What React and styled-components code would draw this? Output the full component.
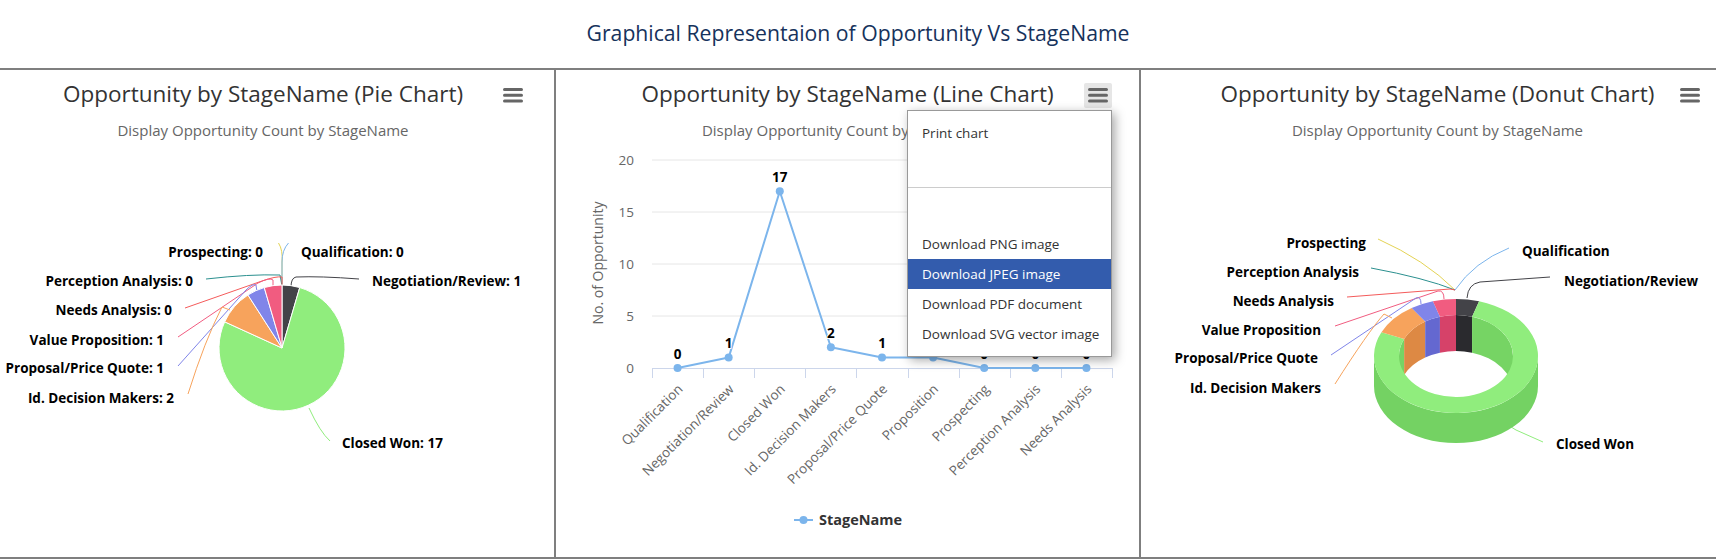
import React from "react"
import styled, { createGlobalStyle } from "styled-components"

const LINE = "#7f7f7f"
const FONT = `"Open Sans", "Noto Sans", "DejaVu Sans", sans-serif`

const GlobalStyle = createGlobalStyle`
  * {
    box-sizing: border-box;
  }
  body {
    margin: 0;
    background: #fff;
    font-family: ${FONT};
  }
`

const Page = styled.div`
  width: 1716px;
  height: 559px;
  overflow: hidden;
  background: #fff;
`

const Header = styled.header`
  height: 70px;
  border-bottom: 2px solid ${LINE};
  display: flex;
  align-items: center;
  justify-content: center;
  padding-bottom: 4px;
`

const PageTitle = styled.h1`
  margin: 0;
  font-size: 21.2px;
  font-weight: 400;
  color: #16325c;
`

const PanelRow = styled.div`
  display: grid;
  grid-template-columns: 554px 585px 1fr;
  height: 489px;
  border-bottom: 2px solid ${LINE};
`

const Panel = styled.section`
  position: relative;
  min-width: 0;
  border-left: ${(p) => (p.$divided ? `2px solid ${LINE}` : "none")};
`

const ChartHead = styled.div`
  height: 71px;
  padding: 9px ${(p) => p.$padRight || 0}px 0 ${(p) => p.$padLeft || 0}px;
  text-align: center;
  white-space: nowrap;
`

const ChartTitle = styled.h2`
  margin: 0;
  font-size: 22.5px;
  line-height: 30px;
  font-weight: 400;
  color: #333;
`

const ChartSubtitle = styled.p`
  margin: 11px 0 0;
  font-size: 15px;
  line-height: 21px;
  color: #666;
`

const MenuButton = styled.button`
  position: absolute;
  top: 13px;
  right: ${(p) => p.$right}px;
  width: 28px;
  height: 25px;
  padding: 0;
  border: none;
  border-radius: 2px;
  background: ${(p) => (p.$open ? "#e6e6e6" : "transparent")};
  display: flex;
  align-items: center;
  justify-content: center;
  cursor: pointer;
`

const ExportMenu = styled.ul`
  position: absolute;
  left: 351px;
  top: 40px;
  width: 205px;
  margin: 0;
  padding: 7px 0;
  list-style: none;
  background: #fff;
  border: 1px solid #999;
  box-shadow: 3px 3px 10px rgba(0, 0, 0, 0.35);
  z-index: 2;
`

const MenuItem = styled.li`
  height: 30px;
  padding: 0 14px;
  font-size: 13.5px;
  line-height: 30px;
  white-space: nowrap;
  color: ${(p) => (p.$active ? "#fff" : "#333")};
  background: ${(p) => (p.$active ? "#335cad" : "transparent")};
`

const MenuGap = styled.li`
  height: ${(p) => p.$h}px;
`

const MenuDivider = styled.li`
  height: 1px;
  background: #ccc;
`

const ChartCanvas = styled.svg`
  display: block;
  overflow: visible;
  font-family: ${FONT};
`

const DataLabel = styled.text`
  font-size: 13.5px;
  font-weight: 700;
  fill: #000;
  stroke: #fff;
  stroke-width: 2px;
  stroke-linejoin: round;
  paint-order: stroke;
`

const AxisLabel = styled.text`
  font-size: 13.5px;
  fill: #666;
`

const AxisTitle = styled.text`
  font-size: 14px;
  fill: #666;
`

const LegendText = styled.text`
  font-size: 14.5px;
  font-weight: 700;
  fill: #333;
`

const Burger = () => (
  <svg width="20" height="15" viewBox="0 0 20 15">
    <path
      d="M1.5 1.5H18.5M1.5 7.2H18.5M1.5 12.9H18.5"
      stroke="#666"
      strokeWidth="3"
      strokeLinecap="round"
    />
  </svg>
)

const STAGES = [
  { name: "Qualification", value: 0, color: "#7cb5ec", inner: "#5f97cf" },
  { name: "Negotiation/Review", value: 1, color: "#434348", inner: "#2a2a2e" },
  { name: "Closed Won", value: 17, color: "#90ed7d", inner: "#76d464" },
  { name: "Id. Decision Makers", value: 2, color: "#f7a35c", inner: "#dd8944" },
  { name: "Proposal/Price Quote", value: 1, color: "#8085e9", inner: "#6468d0" },
  { name: "Value Proposition", value: 1, color: "#f15c80", inner: "#d64269" },
  { name: "Prospecting", value: 0, color: "#e4d354", inner: "#c9b83c" },
  { name: "Perception Analysis", value: 0, color: "#2b908f", inner: "#1c7675" },
  { name: "Needs Analysis", value: 0, color: "#f45b5b", inner: "#d94444" },
]

const polar = (cx, cy, rx, ry, deg) => {
  const a = (deg * Math.PI) / 180
  return [cx + rx * Math.sin(a), cy - ry * Math.cos(a)]
}

const withAngles = (data) => {
  const total = data.reduce((s, d) => s + d.value, 0)
  let start = 0
  return data
    .map((d) => {
      const sweep = (d.value / total) * 360
      const s = { ...d, a1: start, a2: start + sweep }
      start += sweep
      return s
    })
    .filter((s) => s.value > 0)
}

const pieSlice = (cx, cy, r, a1, a2) => {
  const [x1, y1] = polar(cx, cy, r, r, a1)
  const [x2, y2] = polar(cx, cy, r, r, a2)
  const large = a2 - a1 > 180 ? 1 : 0
  return `M${cx},${cy} L${x1},${y1} A${r},${r} 0 ${large} 1 ${x2},${y2} Z`
}

// pie -----------------------------------------------------------------

const PIE = { cx: 282, cy: 348, r: 63 }

const PIE_LABELS = [
  { text: "Prospecting: 0", x: 263, y: 252, anchor: "end", color: "#e4d354", d: "M278.5,243 Q283,250 282,262 L282,286" },
  { text: "Qualification: 0", x: 301, y: 252, anchor: "start", color: "#7cb5ec", d: "M288.5,243 Q282,250 282,262 L282,286" },
  { text: "Perception Analysis: 0", x: 193, y: 281, anchor: "end", color: "#2b908f", d: "M206,279 Q250,274 280,275 L282,286" },
  { text: "Negotiation/Review: 1", x: 372, y: 281, anchor: "start", color: "#434348", d: "M359,279 Q320,276 296,277 Q291,278 291,287" },
  { text: "Needs Analysis: 0", x: 172, y: 310, anchor: "end", color: "#f45b5b", d: "M185,308 L262,281 Q276,276 282,277 L282,286" },
  { text: "Value Proposition: 1", x: 164, y: 340, anchor: "end", color: "#f15c80", d: "M178,337 L258,283 Q270,277 273,280 L273,287" },
  { text: "Proposal/Price Quote: 1", x: 164, y: 368, anchor: "end", color: "#8085e9", d: "M178,366 L246,290 Q253,283 256,285 L257,292" },
  { text: "Id. Decision Makers: 2", x: 174, y: 398, anchor: "end", color: "#f7a35c", d: "M188,394 Q205,340 222,307 L230,310" },
  { text: "Closed Won: 17", x: 342, y: 443, anchor: "start", color: "#90ed7d", d: "M330,441 Q320,432 309,408" },
]

const PieChart = () => (
  <ChartCanvas width="554" height="416">
    <g transform="translate(0,-141)">
      {PIE_LABELS.map((l) => (
        <path key={l.text} d={l.d} fill="none" stroke={l.color} strokeWidth="1" />
      ))}
      {withAngles(STAGES).map((s) => (
        <path
          key={s.name}
          d={pieSlice(PIE.cx, PIE.cy, PIE.r, s.a1, s.a2)}
          fill={s.color}
          stroke="#fff"
          strokeWidth="1"
          strokeLinejoin="round"
        />
      ))}
      {PIE_LABELS.map((l) => (
        <DataLabel key={l.text} x={l.x} y={l.y + 4.5} textAnchor={l.anchor}>
          {l.text}
        </DataLabel>
      ))}
    </g>
  </ChartCanvas>
)

// line ----------------------------------------------------------------

const CATEGORIES = [
  "Qualification",
  "Negotiation/Review",
  "Closed Won",
  "Id. Decision Makers",
  "Proposal/Price Quote",
  "Proposition",
  "Prospecting",
  "Perception Analysis",
  "Needs Analysis",
]
const COUNTS = [0, 1, 17, 2, 1, 1, 0, 0, 0]
const PLOT = { left: 652, right: 1112, top: 160, bottom: 368 }
const STEP = (PLOT.right - PLOT.left) / CATEGORIES.length
const xOf = (i) => PLOT.left + STEP * (i + 0.5)
const yOf = (v) => PLOT.bottom - (v * (PLOT.bottom - PLOT.top)) / 20

const LineChart = () => {
  const points = COUNTS.map((v, i) => [xOf(i), yOf(v)])
  return (
    <ChartCanvas width="583" height="416">
      <g transform="translate(-556,-141)">
        {[20, 15, 10, 5].map((v) => (
          <line key={v} x1={PLOT.left} x2={PLOT.right} y1={yOf(v)} y2={yOf(v)} stroke="#e6e6e6" />
        ))}
        {[20, 15, 10, 5, 0].map((v) => (
          <AxisLabel key={v} x="634" y={yOf(v) + 4.5} textAnchor="end">
            {v}
          </AxisLabel>
        ))}
        <AxisTitle transform="translate(603,263) rotate(-90)" textAnchor="middle">
          No. of Opportunity
        </AxisTitle>
        <line x1={PLOT.left} x2={PLOT.right} y1="368.5" y2="368.5" stroke="#ccd6eb" />
        {Array.from({ length: CATEGORIES.length + 1 }, (_, i) => {
          const x = Math.round(PLOT.left + STEP * i) + 0.5
          return <line key={i} x1={x} x2={x} y1="368" y2="378" stroke="#ccd6eb" />
        })}
        {CATEGORIES.map((c, i) => (
          <AxisLabel
            key={c}
            transform={`translate(${xOf(i) + 6},390) rotate(-45)`}
            textAnchor="end"
          >
            {c}
          </AxisLabel>
        ))}
        <polyline
          points={points.map((p) => p.join(",")).join(" ")}
          fill="none"
          stroke="#7cb5ec"
          strokeWidth="2"
          strokeLinejoin="round"
        />
        {points.map(([x, y], i) => (
          <circle key={i} cx={x} cy={y} r="4" fill="#7cb5ec" />
        ))}
        {points.map(([x, y], i) => (
          <DataLabel key={i} x={x} y={y - 9.5} textAnchor="middle">
            {COUNTS[i]}
          </DataLabel>
        ))}
        <line x1="794" x2="813" y1="520" y2="520" stroke="#7cb5ec" strokeWidth="2" />
        <circle cx="803.5" cy="520" r="4" fill="#7cb5ec" />
        <LegendText x="819" y="525">
          StageName
        </LegendText>
      </g>
    </ChartCanvas>
  )
}

// donut ---------------------------------------------------------------

const DONUT = { cx: 1456, cy: 356, rx: 82, ry: 57, irx: 57, iry: 41, depth: 30, innerDepth: 36 }

const ringSegment = ({ cx, cy, rx, ry, irx, iry }, a1, a2) => {
  const [ox1, oy1] = polar(cx, cy, rx, ry, a1)
  const [ox2, oy2] = polar(cx, cy, rx, ry, a2)
  const [ix1, iy1] = polar(cx, cy, irx, iry, a1)
  const [ix2, iy2] = polar(cx, cy, irx, iry, a2)
  const large = a2 - a1 > 180 ? 1 : 0
  return `M${ox1},${oy1} A${rx},${ry} 0 ${large} 1 ${ox2},${oy2} L${ix2},${iy2} A${irx},${iry} 0 ${large} 0 ${ix1},${iy1} Z`
}

const wallBand = (cx, cy, rx, ry, depth, a1, a2) => {
  const [x1, y1] = polar(cx, cy, rx, ry, a1)
  const [x2, y2] = polar(cx, cy, rx, ry, a2)
  const large = a2 - a1 > 180 ? 1 : 0
  return `M${x1},${y1} A${rx},${ry} 0 ${large} 1 ${x2},${y2} L${x2},${y2 + depth} A${rx},${ry} 0 ${large} 0 ${x1},${y1 + depth} Z`
}

// back half of the hole: 270..360 and 0..90
const backRanges = (a1, a2) =>
  [
    [0, 90],
    [270, 360],
  ]
    .map(([lo, hi]) => [Math.max(a1, lo), Math.min(a2, hi)])
    .filter(([lo, hi]) => hi > lo)

const DONUT_LABELS = [
  { text: "Prospecting", x: 1366, y: 243, anchor: "end", color: "#e4d354", d: "M1378,239 Q1425,260 1455,290" },
  { text: "Qualification", x: 1522, y: 251, anchor: "start", color: "#7cb5ec", d: "M1509,248 Q1474,262 1455,290" },
  { text: "Perception Analysis", x: 1359, y: 272, anchor: "end", color: "#2b908f", d: "M1371,268 Q1425,278 1455,290" },
  { text: "Negotiation/Review", x: 1564, y: 281, anchor: "start", color: "#434348", d: "M1550,277 L1480,282 Q1468,284 1467,298" },
  { text: "Needs Analysis", x: 1334, y: 301, anchor: "end", color: "#f45b5b", d: "M1347,297 L1450,289 L1455,290" },
  { text: "Value Proposition", x: 1321, y: 330, anchor: "end", color: "#f15c80", d: "M1335,326 L1438,291 Q1444,290 1444,299" },
  { text: "Proposal/Price Quote", x: 1318, y: 358, anchor: "end", color: "#8085e9", d: "M1331,355 L1416,298 Q1421,296 1421,304" },
  { text: "Id. Decision Makers", x: 1321, y: 388, anchor: "end", color: "#f7a35c", d: "M1335,384 Q1368,332 1384,314 L1392,318" },
  { text: "Closed Won", x: 1556, y: 444, anchor: "start", color: "#90ed7d", d: "M1543,442 L1516,430 Q1500,421 1491,409" },
]

const DonutChart = () => {
  const { cx, cy, rx, ry, irx, iry, depth, innerDepth } = DONUT
  const slices = withAngles(STAGES)
  return (
    <ChartCanvas width="575" height="416">
      <g transform="translate(-1141,-141)">
        {DONUT_LABELS.map((l) => (
          <path key={l.text} d={l.d} fill="none" stroke={l.color} strokeWidth="1" />
        ))}
        <path d={wallBand(cx, cy, rx, ry, depth, 90, 270)} fill="#74d263" />
        {slices.map((s) =>
          backRanges(s.a1, s.a2).map(([lo, hi]) => (
            <path
              key={`${s.name}-${lo}`}
              d={wallBand(cx, cy, irx, iry, innerDepth, lo, hi)}
              fill={s.inner}
            />
          ))
        )}
        {slices.map((s) => (
          <path key={s.name} d={ringSegment(DONUT, s.a1, s.a2)} fill={s.color} />
        ))}
        {DONUT_LABELS.map((l) => (
          <DataLabel key={l.text} x={l.x} y={l.y + 4.5} textAnchor={l.anchor}>
            {l.text}
          </DataLabel>
        ))}
      </g>
    </ChartCanvas>
  )
}

const App = () => (
  <Page>
    <GlobalStyle />
    <Header>
      <PageTitle>Graphical Representaion of Opportunity Vs StageName</PageTitle>
    </Header>
    <PanelRow>
      <Panel>
        <ChartHead $padRight={28}>
          <ChartTitle>Opportunity by StageName (Pie Chart)</ChartTitle>
          <ChartSubtitle>Display Opportunity Count by StageName</ChartSubtitle>
        </ChartHead>
        <MenuButton $right={27} aria-label="Chart context menu">
          <Burger />
        </MenuButton>
        <PieChart />
      </Panel>

      <Panel $divided>
        <ChartHead>
          <ChartTitle>Opportunity by StageName (Line Chart)</ChartTitle>
          <ChartSubtitle>Display Opportunity Count by StageName</ChartSubtitle>
        </ChartHead>
        <MenuButton $right={27} $open aria-label="Chart context menu">
          <Burger />
        </MenuButton>
        <ExportMenu>
          <MenuItem>Print chart</MenuItem>
          <MenuGap $h={39} />
          <MenuDivider />
          <MenuGap $h={41} />
          <MenuItem>Download PNG image</MenuItem>
          <MenuItem $active>Download JPEG image</MenuItem>
          <MenuItem>Download PDF document</MenuItem>
          <MenuItem>Download SVG vector image</MenuItem>
        </ExportMenu>
        <LineChart />
      </Panel>

      <Panel $divided>
        <ChartHead $padLeft={18}>
          <ChartTitle>Opportunity by StageName (Donut Chart)</ChartTitle>
          <ChartSubtitle>Display Opportunity Count by StageName</ChartSubtitle>
        </ChartHead>
        <MenuButton $right={12} aria-label="Chart context menu">
          <Burger />
        </MenuButton>
        <DonutChart />
      </Panel>
    </PanelRow>
  </Page>
)

export default App
